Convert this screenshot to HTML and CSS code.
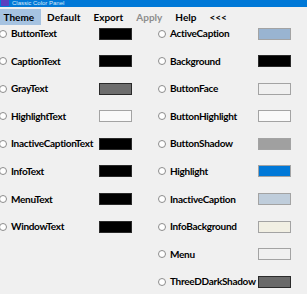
FILE: index.html
```html
<!DOCTYPE html>
<html>
<head>
<meta charset="utf-8">
<link rel="stylesheet" href="styles.css">
</head>
<body>
<div class="titlebar">
  <span class="app-icon"></span>
  <span class="title">Classic Color Panel</span>
</div>
<div class="menubar">
  <span class="menu active">Theme</span>
  <span class="menu">Default</span>
  <span class="menu">Export</span>
  <span class="menu disabled">Apply</span>
  <span class="menu">Help</span>
  <span class="menu">&lt;&lt;&lt;</span>
</div>
<div class="columns">
  <div class="col">
    <div class="row"><span class="radio"></span><span class="label">ButtonText</span><span class="swatch" style="background:#000"></span></div>
    <div class="row"><span class="radio"></span><span class="label">CaptionText</span><span class="swatch" style="background:#000"></span></div>
    <div class="row"><span class="radio"></span><span class="label">GrayText</span><span class="swatch" style="background:#6d6d6d"></span></div>
    <div class="row"><span class="radio"></span><span class="label">HighlightText</span><span class="swatch light" style="background:#f9f9f9"></span></div>
    <div class="row"><span class="radio"></span><span class="label">InactiveCaptionText</span><span class="swatch" style="background:#000"></span></div>
    <div class="row"><span class="radio"></span><span class="label">InfoText</span><span class="swatch" style="background:#000"></span></div>
    <div class="row"><span class="radio"></span><span class="label">MenuText</span><span class="swatch" style="background:#000"></span></div>
    <div class="row"><span class="radio"></span><span class="label">WindowText</span><span class="swatch" style="background:#000"></span></div>
  </div>
  <div class="col">
    <div class="row"><span class="radio"></span><span class="label">ActiveCaption</span><span class="swatch light" style="background:#99b4d1"></span></div>
    <div class="row"><span class="radio"></span><span class="label">Background</span><span class="swatch" style="background:#000"></span></div>
    <div class="row"><span class="radio"></span><span class="label">ButtonFace</span><span class="swatch light" style="background:#f0f0f0"></span></div>
    <div class="row"><span class="radio"></span><span class="label">ButtonHighlight</span><span class="swatch light" style="background:#f9f9f9"></span></div>
    <div class="row"><span class="radio"></span><span class="label">ButtonShadow</span><span class="swatch light" style="background:#a0a0a0"></span></div>
    <div class="row"><span class="radio"></span><span class="label">Highlight</span><span class="swatch light" style="background:#0078d7"></span></div>
    <div class="row"><span class="radio"></span><span class="label">InactiveCaption</span><span class="swatch light" style="background:#bfcddb"></span></div>
    <div class="row"><span class="radio"></span><span class="label">InfoBackground</span><span class="swatch light" style="background:#f1efe3"></span></div>
    <div class="row"><span class="radio"></span><span class="label">Menu</span><span class="swatch light" style="background:#f0f0f0"></span></div>
    <div class="row"><span class="radio"></span><span class="label">ThreeDDarkShadow</span><span class="swatch" style="background:#696969"></span></div>
  </div>
</div>
</body>
</html>
```
FILE: styles.css
```css
html, body {
  margin: 0;
  padding: 0;
  background: #f0f0f0;
  overflow: hidden;
}
body {
  font-family: Lato, "Open Sans", sans-serif;
  font-weight: 700;
  color: #000;
  width: 307px;
  height: 294px;
}
.titlebar {
  height: 7px;
  overflow: hidden;
  background: #0078d7;
  display: flex;
  align-items: flex-end;
  gap: 3px;
  padding-left: 1px;
  color: #dbe9f7;
  font-family: "Liberation Sans", sans-serif;
  font-size: 6px;
  line-height: 7px;
  font-weight: 400;
}
.app-icon {
  width: 8px;
  height: 6px;
  background: #5a3fc0;
  align-self: flex-start;
}
.menubar {
  display: flex;
  height: 20px;
  padding-top: 2px;
  box-sizing: border-box;
  margin-left: -3px;
}
.menu {
  font-size: 10px;
  line-height: 16px;
  height: 16px;
  padding: 0 6.5px;
}
.menu.active {
  background: #a6c3e1;
}
.menu.disabled {
  color: #8d8d8d;
}
.columns {
  display: flex;
  margin-left: -1px;
}
.col {
  width: 159px;
  flex: 0 0 159px;
  display: flex;
  flex-direction: column;
}
.row {
  display: grid;
  grid-template-columns: 8px 84px 33px;
  column-gap: 4px;
  align-items: center;
  height: 13px;
  margin-bottom: 14.6px;
  font-size: 10px;
  letter-spacing: -0.3px;
  white-space: nowrap;
}
.radio {
  width: 8px;
  height: 8px;
  box-sizing: border-box;
  border: 1px solid #8c8c8c;
  border-radius: 50%;
  background: #fff;
}
.label {
  line-height: 13px;
}
.swatch {
  height: 12px;
  box-sizing: border-box;
  border: 1px solid #2a2a2a;
}
.swatch.light {
  border-color: #a3a3a3;
}
```
